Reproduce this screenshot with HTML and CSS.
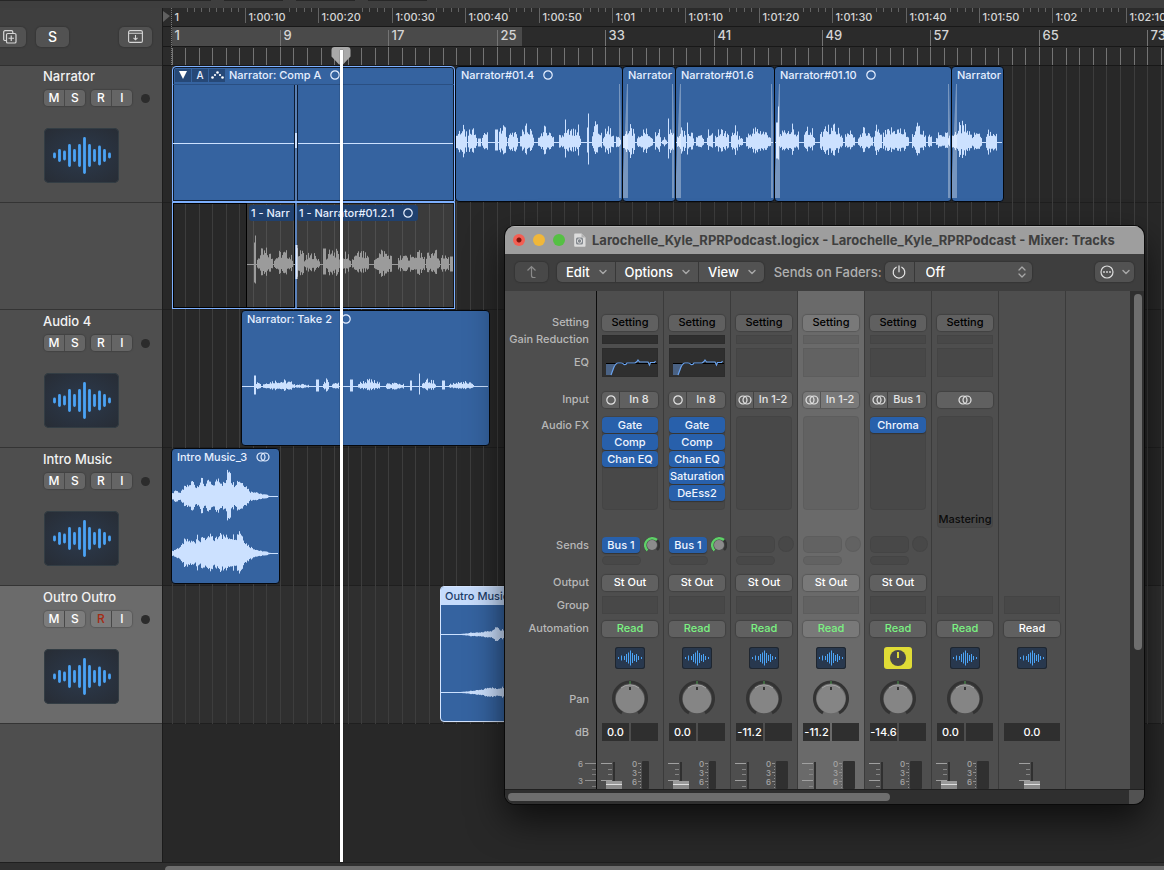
FILE: index.html
```html
<!DOCTYPE html>
<html lang="en">
<head>
    <meta charset="UTF-8">
    <meta name="viewport" content="width=device-width, initial-scale=1.0">
    <title>Larochelle_Kyle_RPRPodcast - Tracks</title>
    <link rel="stylesheet" href="styles.css">
</head>
<body>

    <!-- shared icons -->
    <svg class="defs" width="0" height="0" aria-hidden="true">
        <symbol id="icon-wave" viewBox="0 0 75 55">
            <path d="M10.5 26v3M15.5 22.500v10M20.500 24v7M25.500 17.500v20M30.500 22.500v10M35.500 17.500v20M40.500 10.500v34M45.500 17.500v20M50.500 22.500v10M55.500 19v17M60.500 22.500v10M65.500 26v3" fill="none" stroke="#4ba3f5" stroke-width="2.800" stroke-linecap="round"/>
        </symbol>
        <symbol id="icon-wave-small" viewBox="0 0 30 22">
            <path d="M3.500 10v2M6.500 8.500v5M9.500 9v4M11.500 7v8M13.500 5.500v11M15.500 3.500v15M17.500 6v10M19.500 8v6M21.500 7v8M23.500 9v4M26.500 10v2" fill="none" stroke="#4ba3f5" stroke-width="1"/>
        </symbol>
        <symbol id="icon-mono" viewBox="0 0 10 10">
            <circle cx="5" cy="5" r="4.200" fill="none" stroke="currentColor" stroke-width="1.200"/>
        </symbol>
        <symbol id="icon-stereo" viewBox="0 0 14 10">
            <circle cx="5" cy="5" r="4" fill="none" stroke="currentColor" stroke-width="1.200"/>
            <circle cx="9" cy="5" r="4" fill="none" stroke="currentColor" stroke-width="1.200"/>
        </symbol>
        <symbol id="icon-chevron" viewBox="0 0 8 6">
            <path d="M1 1.500l3 3 3-3" fill="none" stroke="#a8a8a8" stroke-width="1.400" stroke-linecap="round" stroke-linejoin="round"/>
        </symbol>
    </svg>

    <div class="topbar"><i></i><i></i><i></i><i></i></div>

    <div class="workspace">
        <aside class="sidebar">
            <div class="sidebar-tools">
                <button class="tool tool-add" aria-label="Duplicate track">
                    <svg width="14" height="14" viewBox="0 0 14 14" fill="none" stroke="#d6d6d6" stroke-width="1.200"><path d="M3.500 10.500H2A1.300 1.300 0 0 1 .7 9.200V2A1.300 1.300 0 0 1 2 .7h6.500A1.300 1.300 0 0 1 9.800 2v1.500"/><rect x="3.500" y="3.500" width="9.500" height="9.500" rx="1.300"/><path d="M8.250 5.500v5.500M5.500 8.250H11"/></svg>
                </button>
                <button class="tool tool-solo">S</button>
                <button class="tool tool-catch" aria-label="Track header configuration">
                    <svg width="15" height="13" viewBox="0 0 15 13" fill="none" stroke="#d6d6d6" stroke-width="1.100"><rect x=".6" y=".6" width="13.800" height="11.800" rx="1.500"/><path d="M1 3.200h13M7.500 5v4.500M5.500 7.800l2 2 2-2"/></svg>
                </button>
            </div>
            <div class="tracks" id="tracks"></div>
        </aside>

        <main class="timeline">
            <svg class="ruler" id="ruler"></svg>
            <div class="lanes" id="lanes">
                <svg class="grid" id="grid"></svg>
                <div class="lane lane-tall"></div>
                <div class="lane"></div>
                <div class="lane"></div>
                <div class="lane lane-selected"></div>
            </div>
            <div class="playhead">
                <svg width="20" height="18" viewBox="0 0 20 18"><path d="M3.500 0h13A3 3 0 0 1 19.500 3v6.500L12 17.500H8L.5 9.500V3A3 3 0 0 1 3.500 0z" fill="#a9a9a9"/></svg>
                <div class="playhead-line"></div>
            </div>
        </main>
    </div>
    <div class="page-scroll"><div class="page-scroll-thumb"></div></div>

    <section class="mixer">
        <header class="titlebar">
            <span class="light light-close"></span>
            <span class="light light-min"></span>
            <span class="light light-zoom"></span>
            <svg width="13" height="14" viewBox="0 0 13 14"><path d="M2 .5h6.500l4 4V13a.8.800 0 0 1-.8.800H2a.8.800 0 0 1-.8-.8V1.300A.8.800 0 0 1 2 .5z" fill="#dcdcdc"/><path d="M8.500.5v4h4z" fill="#b4b4b4"/><rect x="3" y="4.500" width="7" height="7" rx="1.500" fill="#83888e"/><circle cx="6.500" cy="8" r="2.200" fill="none" stroke="#dcdcdc"/></svg>
            <h1>Larochelle_Kyle_RPRPodcast.logicx - Larochelle_Kyle_RPRPodcast - Mixer: Tracks</h1>
        </header>

        <div class="toolbar">
            <button class="tb-button tb-up" aria-label="Up">
                <svg width="12" height="14" viewBox="0 0 12 14" fill="none" stroke="#8a8a8a" stroke-width="1.200"><path d="M1.500 5.500L5.500 1.500l4 4M5.500 1.500v9a2 2 0 0 0 2 2h2"/></svg>
            </button>
            <div class="tb-group">
                <button class="tb-menu">Edit <svg width="8" height="6"><use href="#icon-chevron"/></svg></button>
                <button class="tb-menu">Options <svg width="8" height="6"><use href="#icon-chevron"/></svg></button>
                <button class="tb-menu">View <svg width="8" height="6"><use href="#icon-chevron"/></svg></button>
            </div>
            <label class="tb-label" for="sends">Sends on Faders:</label>
            <div class="tb-group tb-sends">
                <button class="tb-power" aria-label="Sends on faders power">
                    <svg width="14" height="14" viewBox="0 0 14 14" fill="none" stroke="#e8e8e8" stroke-width="1.200" stroke-linecap="round"><path d="M4.200 2.200a5.800 5.800 0 1 0 5.600 0M7 .8v6"/></svg>
                </button>
                <div class="tb-select">
                    <select id="sends"><option>Off</option><option>Bus 1</option></select>
                    <svg width="8" height="12" viewBox="0 0 8 12" fill="none" stroke="#a8a8a8" stroke-width="1.300" stroke-linecap="round" stroke-linejoin="round"><path d="M1 4l3-3 3 3M1 8l3 3 3-3"/></svg>
                </div>
            </div>
            <button class="tb-button tb-more" aria-label="More">
                <svg width="14" height="14" viewBox="0 0 14 14"><circle cx="7" cy="7" r="6" fill="none" stroke="#dcdcdc" stroke-width="1.200"/><circle cx="4" cy="7" r=".9" fill="#dcdcdc"/><circle cx="7" cy="7" r=".9" fill="#dcdcdc"/><circle cx="10" cy="7" r=".9" fill="#dcdcdc"/></svg>
                <svg width="8" height="6"><use href="#icon-chevron"/></svg>
            </button>
        </div>

        <div class="mixer-body">
            <div class="strip-labels">
                <div class="slot setting">Setting</div>
                <div class="slot gain">Gain Reduction</div>
                <div class="slot eq">EQ</div>
                <div class="slot input">Input</div>
                <div class="slot fx">Audio FX</div>
                <div class="slot sends">Sends</div>
                <div class="slot output">Output</div>
                <div class="slot group">Group</div>
                <div class="slot automation">Automation</div>
                <div class="slot icon"></div>
                <div class="slot pan">Pan</div>
                <div class="slot db">dB</div>
                <div class="slot fader">
                    <svg width="91" height="28"><path d="M80 2.500h11M80 19.500h11" stroke="#909090"/><path d="M87 8.500h4M87 13.500h4M87 25.500h4" stroke="#7a7a7a"/><text x="73" y="6">6</text><text x="73" y="23">3</text></svg>
                </div>
            </div>
            <div class="strips" id="strips"></div>
            <div class="vscroll"><div class="vscroll-thumb"></div></div>
        </div>
        <div class="hscroll"><div class="hscroll-thumb"></div><div class="hscroll-corner"></div></div>
    </section>

    <script src="script.js"></script>
</body>
</html>
```
FILE: styles.css
```css
* {
    box-sizing: border-box;
}
body {
    margin: 0;
    height: 100vh;
    display: flex;
    flex-direction: column;
    overflow: hidden;
    background-color: #282828;
    color: #f2f2f2;
    font-family: Inter, "Liberation Sans", sans-serif;
    font-size: 11px;
    font-weight: 500;
}
button, select {
    margin: 0;
    padding: 0;
    border: none;
    background: none;
    color: inherit;
    font: inherit;
}
svg {
    display: block;
    flex: none;
}
.defs {
    position: absolute;
}
.topbar {
    display: flex;
    gap: 13px;
    height: 8px;
    background-color: #3e3e3e;
}
.topbar i {
    width: 59px;
    height: 1px;
    background-color: #262626;
}
.topbar i:first-child {
    width: 211px;
}
.workspace {
    flex: 1;
    min-height: 0;
    display: grid;
    grid-template-columns: 162px 1fr;
}

/* Track headers */
.sidebar {
    display: flex;
    flex-direction: column;
    background-color: #4e4e4e;
}
.sidebar-tools {
    display: flex;
    align-items: center;
    height: 57px;
    padding-right: 10px;
    background-color: #3f3f3f;
}
.tool {
    display: flex;
    align-items: center;
    justify-content: center;
    width: 33px;
    height: 20px;
    border-radius: 5px;
    background-color: #525252;
    box-shadow: 0 0 1px 1px #383838;
    font-size: 14px;
    color: #fff;
}
.tool-add {
    margin-left: -7px;
}
.tool-solo {
    margin-left: 10px;
}
.tool-catch {
    margin-left: auto;
}
.track {
    height: 138px;
    padding: 3px 0 0 43px;
    border-bottom: 1px solid #343434;
}
.track-tall {
    height: 245px;
    border-top: 1px solid #303030;
    padding-top: 2px;
    background: linear-gradient(#343434, #343434) 0 136px / 100% 1px no-repeat;
}
.track-selected {
    background-color: #6b6b6b;
}
.track-name {
    line-height: 16px;
    font-size: 13px;
}
.track-buttons {
    display: flex;
    align-items: center;
    gap: 6px;
    margin: 6px 0 22px 1px;
}
.pair {
    display: flex;
    width: 41px;
    height: 16px;
    border-radius: 4px;
    background-color: #656565;
    box-shadow: 0 0 1px 1px #434343;
}
.track-selected .pair {
    background-color: #7c7c7c;
    box-shadow: 0 0 1px 1px #5a5a5a;
}
.pair button {
    flex: 1;
    font-size: 12px;
    line-height: 16px;
    color: #fff;
}
.pair button + button {
    border-left: 1px solid #484848;
}
.pair .armed {
    color: #a62a12;
}
.dot {
    width: 9px;
    height: 9px;
    margin-left: 3px;
    border-radius: 50%;
    background-color: #2c2c2c;
}
.track-icon {
    width: 75px;
    height: 55px;
    margin-left: 1px;
    border-radius: 5px;
    background: radial-gradient(#2c3a4d, #272c34);
    box-shadow: inset 0 0 0 1px #333d44;
}

/* Timeline */
.timeline {
    position: relative;
    display: flex;
    flex-direction: column;
    min-width: 0;
    overflow: hidden;
    border-left: 1px solid #1c1c1c;
}
.ruler {
    width: 100%;
    height: 58px;
    background-color: #2b2b2b;
}
.ruler text {
    fill: #d5d5d5;
}
.ruler .bar-number {
    font-size: 13px;
}
.lanes {
    position: relative;
}
.grid {
    position: absolute;
    width: 100%;
    height: 100%;
}
.lane {
    height: 138px;
    border-bottom: 1px solid #1f1f1f;
}
.lane-tall {
    height: 244px;
    background: linear-gradient(#1f1f1f, #1f1f1f) 0 136px / 100% 1px no-repeat;
}
.lane-selected {
    background-color: #2f2f2f;
}
.region {
    position: absolute;
    height: 136px;
    overflow: hidden;
    border: 1px solid #05080d;
    border-radius: 4px;
    background-color: #3563a0;
    color: #e6efff;
}
.region-title {
    position: relative;
    display: flex;
    align-items: center;
    gap: 9px;
    height: 16px;
    padding-left: 5px;
    white-space: nowrap;
}
.region .wave {
    position: absolute;
    top: -1px;
    left: -1px;
    width: 100%;
    height: 136px;
}
.folder {
    border-color: #7db0ff;
    border-radius: 4px 4px 0 0;
    box-shadow: inset 0 0 0 1px #101a2a;
}
.folder .region-title {
    height: 18px;
    padding: 0 0 1px 2px;
    border-bottom: 1px solid #2a4f82;
}
.badges {
    display: flex;
    gap: 1px;
    margin-right: -5px;
}
.badges span {
    display: flex;
    align-items: center;
    justify-content: center;
    width: 16px;
    height: 13px;
    background-color: #264877;
    font-size: 10px;
}
.takes {
    height: 107px;
    border-color: #7db0ff;
    border-radius: 0;
    background: none;
    box-shadow: inset 0 0 0 1px #000;
}
.take {
    position: absolute;
    top: 0;
    bottom: 1px;
    border-left: 1px solid #000;
    background-color: rgba(255, 255, 255, 0.09);
}
.take .region-title {
    width: max-content;
    height: 16px;
    margin: 2px 0 0 2px;
    padding: 0 5px 0 2px;
    border-radius: 3px;
    background-color: #20416f;
}
.region-selected {
    border-color: #d5e5ff;
}
.region-selected .region-title {
    height: 18px;
    padding-left: 4px;
    background-color: #c6dcfc;
    color: #1d3c68;
}
.playhead {
    position: absolute;
    top: 39px;
    bottom: 0;
    left: 168px;
    width: 20px;
}
.playhead-line {
    position: absolute;
    top: 3px;
    bottom: 0;
    left: 9px;
    width: 3px;
    background-color: #fff;
    box-shadow: 0 0 1px #000;
}
.page-scroll {
    height: 8px;
    padding: 3px 0 0 165px;
    border-top: 1px solid #1f1f1f;
    background-color: #303030;
}
.page-scroll-thumb {
    height: 4px;
    border-radius: 4px 0 0 0;
    background-color: #6e6e6e;
}

/* Mixer window */
.mixer {
    position: absolute;
    top: 226px;
    left: 505px;
    width: 639px;
    height: 578px;
    display: flex;
    flex-direction: column;
    overflow: hidden;
    border-radius: 10px;
    background-color: #4e4e4e;
    box-shadow: 0 0 0 1px #0a0a0a, 0 16px 36px rgba(0, 0, 0, 0.65);
}
.titlebar {
    display: flex;
    align-items: center;
    gap: 8px;
    height: 28px;
    padding: 0 0 1px 8px;
    background-color: #9e9e9e;
    border-top: 1px solid #b5b5b5;
}
.titlebar h1 {
    margin: 0 0 0 -2px;
    font-size: 13px;
    font-weight: 700;
    color: #3f3f3f;
    white-space: nowrap;
}
.light {
    width: 12px;
    height: 12px;
    border-radius: 50%;
}
.light-close {
    background: radial-gradient(circle, #7c130b 2px, #f35f54 3px);
}
.light-min {
    background-color: #f0b73a;
}
.light-zoom {
    background-color: #55c043;
}
.toolbar {
    display: flex;
    align-items: center;
    height: 37px;
    padding: 0 10px 1px 10px;
    background-color: #3e3e3e;
    font-size: 13px;
}
.tb-button, .tb-group {
    display: flex;
    align-items: center;
    justify-content: center;
    height: 20px;
    border-radius: 5px;
    background-color: #525252;
    box-shadow: 0 0 1px 1px #363636;
}
.tb-up {
    width: 33px;
    margin-right: 9px;
    background-color: #484848;
}
.tb-menu {
    display: flex;
    align-items: center;
    justify-content: space-between;
    gap: 9px;
    height: 20px;
    padding: 0 8px 0 9px;
    color: #fff;
}
.tb-menu + .tb-menu {
    border-left: 1px solid #383838;
}
.tb-label {
    margin: 0 3px 0 10px;
    color: #b0b0b0;
    white-space: nowrap;
}
.tb-power {
    display: flex;
    align-items: center;
    justify-content: center;
    width: 30px;
    height: 20px;
    border-right: 1px solid #383838;
}
.tb-select {
    position: relative;
}
.tb-select select {
    width: 117px;
    height: 20px;
    padding-left: 11px;
    appearance: none;
    color: #fff;
}
.tb-select svg {
    position: absolute;
    top: 4px;
    right: 6px;
    pointer-events: none;
}
.tb-more {
    gap: 8px;
    width: 39px;
    margin-left: auto;
}
.mixer-body {
    flex: 1;
    min-height: 0;
    display: flex;
    overflow: hidden;
}
.strip-labels {
    width: 92px;
    border-right: 1px solid #0c0c0c;
    color: #b8b8b8;
    text-align: right;
}
.strip-labels .slot {
    justify-content: flex-end;
    margin-right: 7px;
}
.strip-labels .fx, .strip-labels .sends {
    padding-top: 1px;
}
.strip-labels .fader {
    margin-right: 0;
}
.strips {
    flex: 1;
    display: flex;
    overflow: hidden;
}
.strip {
    flex: none;
    width: 67px;
    padding: 0 5px;
    border-right: 1px solid #3b3b3b;
}
.strip-selected {
    background-color: #6a6a6a;
}

/* Slots are shared by the label column and the channel strips */
.slot {
    display: flex;
    align-items: center;
    line-height: 17px;
}
.setting {
    height: 17px;
    margin-top: 23px;
}
.gain {
    height: 9px;
    margin-top: 4px;
}
.eq {
    height: 29px;
    margin-top: 4px;
}
.input {
    height: 17px;
    margin-top: 14px;
}
.fx {
    height: 112px;
    margin-top: 8px;
    align-items: flex-start;
}
.sends {
    height: 30px;
    margin-top: 8px;
    align-items: flex-start;
}
.output {
    height: 17px;
    margin-top: 8px;
}
.group {
    height: 18px;
    margin-top: 5px;
}
.automation {
    height: 17px;
    margin-top: 6px;
}
.icon {
    height: 22px;
    margin-top: 10px;
    justify-content: center;
}
.pan {
    height: 38px;
    margin-top: 11px;
    justify-content: center;
}
.db {
    gap: 2px;
    height: 18px;
    margin-top: 5px;
}
.fader {
    height: 28px;
    margin-top: 20px;
}
.well {
    width: 100%;
    height: 100%;
    background-color: rgba(0, 0, 0, 0.07);
    box-shadow: inset 0 0 0 1px rgba(0, 0, 0, 0.05);
}
.well-dark {
    background-color: #2f2f2f;
}
.strip-button {
    display: flex;
    align-items: center;
    justify-content: center;
    width: 56px;
    height: 16px;
    border-radius: 4px;
    background-color: rgba(255, 255, 255, 0.1);
    box-shadow: 0 0 1px 1px rgba(0, 0, 0, 0.17);
    color: #fff;
    white-space: nowrap;
}
.strip .setting .strip-button {
    color: #000;
}
.strip .automation .strip-button {
    color: #7bf382;
}
.strip .automation .manual {
    color: #fff;
}
.input-pair .format {
    display: flex;
    align-items: center;
    justify-content: center;
    width: 18px;
    height: 16px;
    border-right: 1px solid rgba(0, 0, 0, 0.3);
}
.input-pair .source {
    flex: 1;
    text-align: center;
}
.input-pair, .format {
    color: #e4e4e4;
}
.fx-well {
    width: 56px;
    height: 94px;
    padding-top: 1px;
    border-radius: 4px;
    background-color: rgba(0, 0, 0, 0.07);
    box-shadow: inset 0 0 0 1px rgba(0, 0, 0, 0.05);
}
.fx-well-master {
    display: flex;
    align-items: flex-end;
    justify-content: center;
    height: 112px;
    color: #0c0c0c;
}
.plugin {
    display: block;
    width: 56px;
    height: 16px;
    margin-bottom: 1px;
    overflow: hidden;
    border-radius: 4px;
    background-color: #2860ab;
    box-shadow: 0 1px 1px #333;
    line-height: 16px;
    color: #f0f5ff;
    white-space: nowrap;
}
.sends-grid {
    display: grid;
    grid-template-columns: 39px 16px;
    grid-template-rows: 17px 9px;
    gap: 3px;
}
.sends-grid .plugin {
    width: 38px;
    margin-top: 1px;
}
.sends-grid .well {
    border-radius: 5px;
}
.sends-grid .knob-well {
    width: 16px;
    height: 16px;
    border-radius: 50%;
}
.strip-icon {
    width: 30px;
    height: 22px;
    border-radius: 3px;
    background-color: #28384e;
    box-shadow: inset 0 0 0 1px #1f262f;
}
.strip-icon-aux {
    width: 28px;
    background-color: #e0dc36;
    box-shadow: none;
}
.readout {
    flex: 1;
    height: 18px;
    background-color: #2f2f2f;
    line-height: 18px;
    text-align: center;
    color: #fff;
}
.readout-half {
    flex: none;
    width: 27px;
}
.fader svg {
    overflow: visible;
}
.strip .fader svg {
    margin-left: -5px;
}
.fader text {
    font-size: 8px;
    fill: #a5a5a5;
}
.vscroll {
    width: 14px;
    padding: 3px 2px 0 4px;
    background-color: #2f2f2f;
}
.vscroll-thumb {
    width: 8px;
    height: 72%;
    border-radius: 4px;
    background-color: #6e6e6e;
}
.hscroll {
    display: flex;
    align-items: center;
    height: 15px;
    padding-left: 3px;
    border-top: 1px solid #202020;
    background-color: #2f2f2f;
}
.hscroll-thumb {
    width: 60%;
    height: 8px;
    border-radius: 4px;
    background-color: #6e6e6e;
}
.hscroll-corner {
    width: 15px;
    height: 14px;
    margin-left: auto;
    background-color: #525252;
}
```
FILE: script.js
```js
const BAR = 13.55;        // pixels per bar
const TEN_SECONDS = 73.4; // pixels per ten seconds
const START = 9;          // x of bar 1

// ---- Ruler and grid ----
function drawRuler() {
    const width = document.getElementById('ruler').clientWidth;
    let out = '<rect x="9" y="19" width="350" height="20" fill="#4a4a4a"/>';
    let bars = '';
    let grid = '';
    for (let bar = 0; START + bar * BAR < width; bar++) {
        const x = Math.floor(START + bar * BAR) + 0.5;
        bars += bar % 8 === 0 && bar > 0 ? `M${x} 22V57` : `M${x} 40V57`;
        grid += `M${x} 0V658`;
        if (bar % 8 === 0) {
            out += `<text class="bar-number" x="${x + (bar ? 3 : 2)}" y="32">${bar + 1}</text>`;
        }
    }
    let times = '';
    for (let i = 0; START + i * TEN_SECONDS < width; i++) {
        const x = Math.floor(START + i * TEN_SECONDS) + 0.5;
        const seconds = i % 6 * 10;
        const label = i === 0 ? '1' : '1:0' + Math.floor(i / 6) + (seconds ? ':' + seconds : '');
        times += i ? `M${x} 0V15` : '';
        out += `<text x="${x + (i ? 3 : 2)}" y="13">${label}</text>`;
        // small ticks only where the label leaves room
        for (let k = 1; k < 10; k++) {
            if (k * 7.34 > label.length * 5 + 4) {
                times += `M${Math.floor(x + k * 7.34) + 0.5} 0V4`;
            }
        }
    }
    out += `<path d="${times}" stroke="#636363"/><path d="${bars}" stroke="#747474"/>`;
    out += '<path d="M0 18.5H4000M0 38.5H4000M0 57.5H4000" stroke="#181818"/>';
    out += '<path d="M8.5 0V57" stroke="#777" stroke-dasharray="1 1"/><path d="M0 3l7 5-7 6z" fill="#606060"/>';
    document.getElementById('ruler').innerHTML = out;
    document.getElementById('grid').innerHTML = `<path d="${grid}" stroke="#3d3d3d"/>`;
}

// ---- Waveforms ----
function noise(i) {
    const v = Math.sin(i * 12.9898) * 43758.5453;
    return v - Math.floor(v);
}

// bursts: [x, width, up, down]
function burstPath(bursts, mid) {
    let d = '';
    bursts.forEach(([x, w, up, down], n) => {
        for (let i = 0; i < w; i++) {
            const edge = 0.5 + 0.5 * Math.sin(Math.PI * (i + 0.5) / w);
            const r = noise(x * 3 + i + n);
            const k = w < 4 ? 1 : edge * (0.42 + 0.62 * r * r);
            d += `M${x + i + 0.5} ${(mid - up * k).toFixed(1)}V${(mid + down * k).toFixed(1)}`;
        }
    });
    return d;
}

// points: [x, amplitude]
function envelopePath(points, mid) {
    let d = '';
    for (let p = 0; p < points.length - 1; p++) {
        const [x0, a0] = points[p];
        const [x1, a1] = points[p + 1];
        for (let x = x0; x < x1; x++) {
            const a = (a0 + (a1 - a0) * (x - x0) / (x1 - x0)) * (0.72 + 0.35 * noise(x));
            d += `M${x + 0.5} ${(mid - a).toFixed(1)}V${(mid + a * 0.9).toFixed(1)}`;
        }
    }
    return d;
}

const wave = (d, mids, width, color, from = 0) =>
    `<path d="${d}" stroke="${color}"/>` +
    mids.map(m => `<path d="M${from} ${m}H${width}" stroke="${color}"/>`).join('');

const MONO = '<svg width="10" height="10"><use href="#icon-mono"/></svg>';
const STEREO = '<svg width="14" height="10"><use href="#icon-stereo"/></svg>';
const LIGHT = '#cce1ff';

const regions = [
    { x: 292, y: 0, w: 168, name: 'Narrator#01.4', icon: MONO, fadeOut: true,
      bursts: [[1,11,19,16],[13,9,18,13],[23,3,4,4],[27,6,17,12],[40,3,13,8],[44,8,22,15],[53,10,14,12],[65,14,19,12],[83,16,17,12],[104,22,15,10],[110,1,23,15],[123,1,18,13],[132,1,15,10],[133,1,29,22],[137,10,22,12],[148,11,17,12],[161,5,9,7]] },
    { x: 459, y: 0, w: 54, name: 'Narrator', fadeIn: true, fadeOut: true,
      bursts: [[1,12,19,16],[15,16,16,12],[33,6,17,12],[40,5,7,5],[46,1,24,16],[47,5,15,12]] },
    { x: 512, y: 0, w: 100, name: 'Narrator#01.6', fadeIn: true, fadeOut: true,
      bursts: [[2,9,15,11],[12,1,20,12],[13,6,14,10],[21,8,14,9],[32,6,16,9],[40,14,16,11],[56,7,18,13],[63,5,9,6],[71,25,18,13]] },
    { x: 611, y: 0, w: 178, name: 'Narrator#01.10', icon: MONO, fadeIn: true, fadeOut: true,
      bursts: [[2,2,20,16],[4,1,36,17],[5,20,20,13],[30,11,18,10],[46,23,20,14],[71,10,16,9],[84,15,16,10],[100,8,20,14],[109,26,19,12],[138,14,20,13],[154,4,10,6],[162,14,13,7]] },
    { x: 788, y: 0, w: 53, name: 'Narrator', fadeIn: true,
      bursts: [[1,20,21,15],[21,10,18,13],[35,11,16,15]] },
    { x: 78, y: 244, w: 249, name: 'Narrator: Take 2', icon: MONO,
      bursts: [[13,2,11,8],[15,5,8,5],[22,32,8,5],[54,14,3,2],[75,3,7,5],[82,6,8,5],[91,7,7,4],[109,3,7,5],[117,22,8,4],[145,18,5,4],[169,2,6,4],[178,1,13,8],[181,14,8,4],[201,3,6,3],[208,25,6,3]], mid: 76.5 },
    { x: 8, y: 382, w: 109, name: 'Intro Music_3', icon: STEREO,
      left: [[0,2],[4,7],[9,4],[13,10],[18,12],[21,17],[25,10],[31,19],[33,12],[38,17],[41,11],[47,20],[51,14],[55,16],[56,30],[59,30],[60,17],[63,13],[67,18],[71,15],[75,11],[79,5],[85,5],[88,3],[95,2],[100,0]],
      right: [[0,2],[5,5],[10,8],[13,14],[16,14],[20,13],[24,13],[26,21],[29,13],[32,19],[36,15],[39,20],[42,15],[47,18],[49,27],[51,19],[57,18],[62,19],[65,18],[68,26],[71,19],[74,12],[78,8],[83,5],[88,3],[95,2],[101,0]],
      mids: [48.5, 105.5] },
    { x: 277, y: 520, w: 109, name: 'Outro Music_3', selected: true,
      left: [[16,0],[24,1],[31,2],[40,2],[48,4],[52,4],[57,9],[60,5],[66,6],[80,12]],
      right: [[16,0],[24,1],[33,2],[42,3],[49,6],[56,4],[66,7],[80,12]],
      mids: [48.5, 106.5] }
];

function title(name, icon) {
    return `<div class="region-title"><span>${name}</span>${icon || ''}</div>`;
}

function drawRegions() {
    const lanes = document.getElementById('lanes');
    let html = `<div class="region folder" style="left:9px;top:0;width:283px">
        <svg class="wave"><path d="M0 77.5H283" stroke="${LIGHT}"/><path d="M122.500 19V136M125.500 19V136" stroke="#0d1c33" stroke-width="1"/><path d="M124 19V136" stroke="#7f9cc6"/><path d="M124 67V82" stroke="${LIGHT}" stroke-width="2"/></svg>
        <div class="region-title"><div class="badges"><span><svg width="8" height="8"><path d="M0 0h8l-4 8z" fill="#fff"/></svg></span><span>A</span><span><svg width="13" height="8" fill="#fff"><circle cx="1.500" cy="6.500" r="1.300"/><circle cx="4" cy="4" r="1.100"/><circle cx="6.500" cy="1.500" r="1.300"/><circle cx="9" cy="4" r="1.100"/><circle cx="11.500" cy="6.500" r="1.300"/></svg></span></div><span>Narrator: Comp A</span>${MONO}</div></div>`;

    const takeWave = [[7,2,22,18],[8,1,29,19],[10,16,18,12],[27,19,16,11],[48,9,20,15],[57,16,13,8],[76,3,16,10],[79,14,18,13],[95,9,13,9],[105,17,15,9],[127,18,18,15],[151,11,12,9],[162,16,15,11],[179,14,17,11],[194,8,13,10],[203,3,8,7]];
    html += `<div class="region takes" style="left:9px;top:136px;width:283px">
        <div class="take" style="left:73px;width:49px">${title('1 - Narr')}</div>
        <div class="take" style="left:121px;width:160px">${title('1 - Narrator#01.2.1', MONO)}</div>
        <svg class="wave"><g transform="translate(75 0)">${wave(burstPath(takeWave, 62.5), [62.500], 206, '#9b9b9b')}</g><path d="M124 1V106" stroke="#5b82bb" stroke-width="2"/><path d="M124.500 43V77" stroke="#dce9ff" stroke-width="2"/></svg></div>`;

    regions.forEach(r => {
        let shapes = '';
        if (r.bursts) {
            const mid = r.mid || 76.5;
            shapes = wave(burstPath(r.bursts, mid), [mid], r.w, LIGHT);
        } else {
            shapes = wave(envelopePath(r.left, r.mids[0]) + envelopePath(r.right, r.mids[1]), r.mids, r.w, LIGHT);
        }
        if (r.fadeIn) shapes += '<path d="M5 18H6V132H1V110z" fill="#fff" opacity=".33"/>';
        if (r.fadeOut) shapes += `<path d="M${r.w - 4} 18h1L${r.w - 1} 110V132H${r.w - 4}z" fill="#fff" opacity=".33"/>`;
        html += `<div class="region ${r.selected ? 'region-selected' : ''}" style="left:${r.x}px;top:${r.y}px;width:${r.w}px"><svg class="wave">${shapes}</svg>${title(r.name, r.icon)}</div>`;
    });
    lanes.insertAdjacentHTML('beforeend', html);
}

// ---- Track headers ----
function drawTracks() {
    const tracks = [['Narrator', 'track-tall'], ['Audio 4', ''], ['Intro Music', ''], ['Outro Outro', 'track-selected']];
    document.getElementById('tracks').innerHTML = tracks.map(([name, cls]) => `
        <div class="track ${cls}">
            <div class="track-name">${name}</div>
            <div class="track-buttons">
                <div class="pair"><button>M</button><button>S</button></div>
                <div class="pair"><button class="${cls === 'track-selected' ? 'armed' : ''}">R</button><button>I</button></div>
                <span class="dot"></span>
            </div>
            <div class="track-icon"><svg width="75" height="55"><use href="#icon-wave"/></svg></div>
        </div>`).join('');
}

// ---- Channel strips ----
const strips = [
    { input: 'In 8', eq: true, fx: ['Gate', 'Comp', 'Chan EQ'], send: 'Bus 1', db: '0.0', cap: true },
    { input: 'In 8', eq: true, fx: ['Gate', 'Comp', 'Chan EQ', 'Saturation', 'DeEss2'], send: 'Bus 1', db: '0.0', cap: true },
    { input: 'In 1-2', stereo: true, fx: [], db: '-11.2' },
    { input: 'In 1-2', stereo: true, fx: [], db: '-11.2', selected: true },
    { input: 'Bus 1', stereo: true, fx: ['Chroma'], db: '-14.6', aux: true },
    { stereo: true, output: true, db: '0.0', cap: true },
    { master: true, db: '0.0', cap: true }
];

const EQ_CURVE = '<svg width="58" height="29"><path d="M4 15.500H55" stroke="#000"/><path d="M4 16h9l-4 11H4z" fill="#4a6284"/><path d="M9 27l3-8q2-4 4-4h3q2 0 3 1.500 2 .5 3-1.500h8l2-1.500 1-1.500 1.500 2H46l1.500 3 1-2.500h4l1-1.500" fill="none" stroke="#6ba4f0" stroke-width="1.200"/></svg>';
const SEND_KNOB = '<svg width="16" height="17"><path d="M3.500 14.500A7 7 0 1 1 13 14" fill="none" stroke="#333" stroke-width="2.500"/><path d="M3.500 14.500A7 7 0 0 1 13 4" fill="none" stroke="#5fd068" stroke-width="2.500"/><circle cx="8" cy="9" r="5" fill="#8b8b8b"/></svg>';
const PAN_KNOB = '<svg width="38" height="38"><path d="M11 33A16.500 16.500 0 1 1 27 33" fill="none" stroke="#333" stroke-width="3"/><circle cx="19" cy="19" r="14.300" fill="#858585"/><path d="M10 8A14.300 14.300 0 0 1 28 8" fill="none" stroke="#a5a5a5"/><path d="M19 1V4" stroke="#4f9b50"/><path d="M19 7V10" stroke="#000" stroke-width="1.200"/></svg>';

function faderSvg(s) {
    const dx = s.master ? 16 : 0;
    let out = `<path d="M${4 + dx} 2.500h11M${4 + dx} 19.500h11" stroke="#a0a0a0"/><path d="M${11 + dx} 8.500h4M${11 + dx} 13.500h4M${11 + dx} 25.500h4" stroke="#858585"/><rect x="${16 + dx}" y="1" width="2" height="27" fill="#303030"/>`;
    if (s.cap) {
        out += `<rect x="${9 + dx}" y="20" width="16" height="8" fill="#8a8a8a"/><rect x="${9 + dx}" y="20" width="16" height="3" fill="#9a9a9a"/><rect x="${9 + dx}" y="23" width="16" height="1" fill="#dedede"/>`;
    }
    if (!s.master) {
        out += '<text x="35" y="6">0</text><text x="35" y="15">3</text><text x="35" y="24">6</text><path d="M43.500 2V28" stroke="#909090" stroke-dasharray="1 2"/><path d="M41 2.500h3M41 11.500h3M41 20.500h3" stroke="#909090"/>';
        out += `<rect x="45" y="0" width="${s.stereo ? 12 : 7}" height="28" rx="1" fill="#303030"/>`;
    }
    return `<svg width="66" height="28">${out}</svg>`;
}

function inputSlot(s) {
    if (s.master) return '';
    if (s.output) return `<button class="strip-button input-pair" aria-label="Format">${STEREO}</button>`;
    return `<div class="strip-button input-pair"><button class="format" aria-label="Format">${s.stereo ? STEREO : MONO}</button><button class="source">${s.input}</button></div>`;
}

function fxSlot(s) {
    if (s.master) return '';
    if (s.output) return '<div class="fx-well fx-well-master">Mastering</div>';
    return `<div class="fx-well">${s.fx.map(f => `<button class="plugin">${f}</button>`).join('')}</div>`;
}

function sendSlot(s) {
    if (s.master || s.output) return '';
    const first = s.send ? `<button class="plugin">${s.send}</button>${SEND_KNOB}` : '<div class="well"></div><div class="well knob-well"></div>';
    return `<div class="sends-grid">${first}<div class="well"></div></div>`;
}

function drawStrips() {
    document.getElementById('strips').innerHTML = strips.map(s => `
        <div class="strip ${s.selected ? 'strip-selected' : ''}">
            <div class="slot setting">${s.master ? '' : '<button class="strip-button">Setting</button>'}</div>
            <div class="slot gain">${s.master ? '' : `<div class="well ${s.eq ? 'well-dark' : ''}"></div>`}</div>
            <div class="slot eq">${s.master ? '' : `<div class="well ${s.eq ? 'well-dark' : ''}">${s.eq ? EQ_CURVE : ''}</div>`}</div>
            <div class="slot input">${inputSlot(s)}</div>
            <div class="slot fx">${fxSlot(s)}</div>
            <div class="slot sends">${sendSlot(s)}</div>
            <div class="slot output">${s.master || s.output ? '' : '<button class="strip-button">St Out</button>'}</div>
            <div class="slot group"><div class="well"></div></div>
            <div class="slot automation"><button class="strip-button ${s.master ? 'manual' : ''}">Read</button></div>
            <div class="slot icon">${s.aux
                ? '<svg class="strip-icon strip-icon-aux" viewBox="0 0 28 22"><circle cx="14" cy="11" r="8" fill="#4a4a4a"/><path d="M14 5v6" stroke="#e0dc36" stroke-width="2"/></svg>'
                : '<svg class="strip-icon"><use href="#icon-wave-small"/></svg>'}</div>
            <div class="slot pan">${s.master ? '' : PAN_KNOB}</div>
            <div class="slot db">${s.master
                ? `<div class="readout">${s.db}</div>`
                : `<div class="readout readout-half">${s.db}</div><div class="readout readout-half"></div>`}</div>
            <div class="slot fader">${faderSvg(s)}</div>
        </div>`).join('');
}

drawRuler();
drawTracks();
drawRegions();
drawStrips();
window.onresize = drawRuler;
```
